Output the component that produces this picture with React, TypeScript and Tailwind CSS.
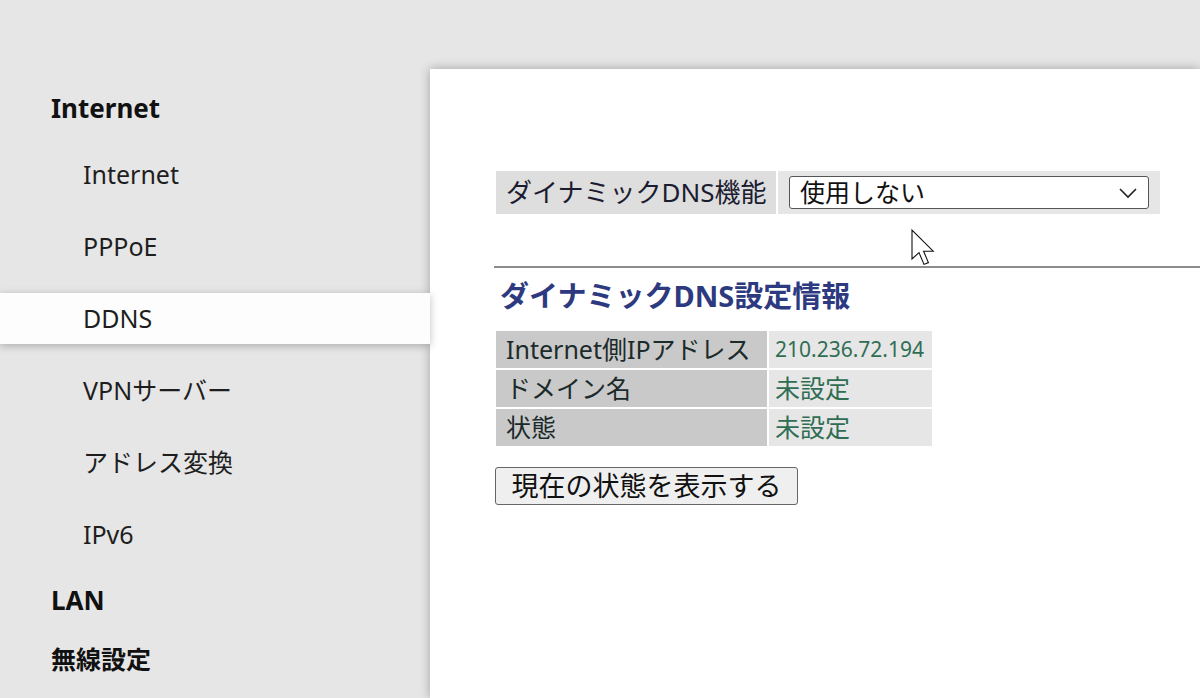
import React from "react";

const jp = "font-['Noto_Sans','Noto_Sans_CJK_JP',sans-serif]";

function SubItem({ label, active }: { label: string; active?: boolean }) {
  return (
    <div
      className={
        "flex h-[51px] items-center pl-[83px] text-[25px] text-[#1e1e1e] " +
        (active
          ? "relative z-10 bg-[#fdfdfd] shadow-[0_2px_8px_rgba(0,0,0,0.25)]"
          : "")
      }
    >
      {label}
    </div>
  );
}

function Cursor() {
  return (
    <svg
      className="absolute left-[480px] top-[159px] z-20"
      width="28"
      height="40"
      viewBox="0 0 14 20"
    >
      <path
        d="M1 1 L1 15.5 L4.5 12.3 L7 18.2 L9.2 17.3 L6.8 11.6 L11.6 11.6 Z"
        fill="#ffffff"
        stroke="#111"
        strokeWidth="0.55"
        strokeLinejoin="miter"
      />
    </svg>
  );
}

export default function App() {
  return (
    <div
      className={
        "flex h-[698px] w-[1200px] overflow-hidden bg-[#e6e6e6] " + jp
      }
    >
      {/* Sidebar */}
      <div className="flex w-[430px] shrink-0 flex-col pt-[83px]">
        <div className="flex h-[50px] items-center pl-[51px] text-[26px] font-bold text-[#111]">
          Internet
        </div>
        <div className="mt-[16px] flex flex-col gap-[21px]">
          <SubItem label="Internet" />
          <SubItem label="PPPoE" />
          <SubItem label="DDNS" active />
          <SubItem label="VPNサーバー" />
          <SubItem label="アドレス変換" />
          <SubItem label="IPv6" />
        </div>
        <div className="mt-[15px] flex h-[50px] items-center pl-[51px] text-[26px] font-bold text-[#111]">
          LAN
        </div>
        <div className="mt-[10px] flex h-[50px] items-center pl-[51px] text-[25px] font-bold text-[#111]">
          無線設定
        </div>
      </div>

      {/* Main panel */}
      <div className="relative mt-[69px] flex-1 bg-white pl-[64px] pt-[102px] shadow-[0_0_10px_rgba(0,0,0,0.3)]">
        <Cursor />
        {/* Setting row */}
        <div className="ml-[2px] flex h-[43px] w-[664px] gap-[2px]">
          <div className="flex w-[280px] items-center bg-[#dedede] pl-[10px] text-[26px] text-[#1c1c30]">
            ダイナミックDNS機能
          </div>
          <div className="flex flex-1 items-center bg-[#e6e6e6] px-[11px]">
            <div className="flex h-[33px] w-full items-center justify-between rounded-[3px] border border-[#555] bg-white pl-[10px] pr-[10px] text-[25px] text-[#111]">
              <span>使用しない</span>
              <svg width="20" height="12" viewBox="0 0 20 12">
                <path
                  d="M2 2 L10 10 L18 2"
                  fill="none"
                  stroke="#222"
                  strokeWidth="1.6"
                />
              </svg>
            </div>
          </div>
        </div>

        {/* Divider */}
        <div className="mt-[52px] h-[2px] bg-[#8c8c8c]" />

        {/* Heading */}
        <div className="ml-[6px] mt-[8px] text-[29px] font-bold leading-[40px] text-[#2e3a80]">
          ダイナミックDNS設定情報
        </div>

        {/* Info table */}
        <div className="ml-[2px] mt-[15px] flex w-[436px] flex-col gap-[2px]">
          {[
            ["Internet側IPアドレス", "210.236.72.194", true],
            ["ドメイン名", "未設定", false],
            ["状態", "未設定", false],
          ].map(([label, value, num]) => (
            <div key={label as string} className="flex h-[37px] gap-[2px]">
              <div className="flex w-[271px] items-center bg-[#c9c9c9] pl-[10px] text-[25px] text-[#1b2a2a]">
                {label}
              </div>
              <div
                className={
                  "flex flex-1 items-center bg-[#e6e6e6] pl-[6px] text-[#2f6e54] " +
                  (num ? "text-[21px]" : "text-[25px]")
                }
              >
                {value}
              </div>
            </div>
          ))}
        </div>

        {/* Button */}
        <button className="ml-[1px] mt-[21px] flex h-[38px] w-[303px] items-center justify-center rounded-[3px] border border-[#666] bg-[#efefef] text-[27px] text-[#111]">
          現在の状態を表示する
        </button>
      </div>
    </div>
  );
}
